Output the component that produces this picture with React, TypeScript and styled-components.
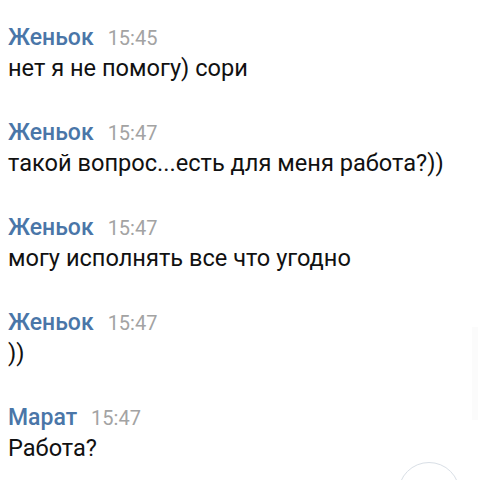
import React from "react";
import styled, { createGlobalStyle } from "styled-components";

const Global = createGlobalStyle`
  html, body { margin: 0; padding: 0; background: #ffffff; }
  body { font-family: Roboto, "Noto Sans", sans-serif; -webkit-font-smoothing: antialiased; }
`;

const Screen = styled.div`
  position: relative;
  width: 479px;
  height: 480px;
  overflow: hidden;
  background: #ffffff;
`;

const List = styled.div`
  display: flex;
  flex-direction: column;
  gap: 35px;
  padding: 24px 8px 0 8px;
`;

const Block = styled.div`
  display: flex;
  flex-direction: column;
`;

const Header = styled.div`
  display: flex;
  align-items: baseline;
  gap: 14px;
  height: 28px;
  line-height: 28px;
`;

const Name = styled.span`
  font-family: Roboto, sans-serif;
  font-weight: 500;
  font-size: 23px;
  color: #4a76a8;
`;

const Time = styled.span`
  font-family: Roboto, sans-serif;
  font-size: 20px;
  color: #a3a3a3;
`;

const Text = styled.div`
  font-family: Roboto, sans-serif;
  font-size: 23.6px;
  line-height: 32px;
  color: #111111;
`;

const Scrollbar = styled.div`
  position: absolute;
  right: 1px;
  top: 327px;
  width: 6px;
  height: 93px;
  background: #fbfbfb;
`;

const FabCircle = styled.div`
  position: absolute;
  left: 398px;
  top: 462px;
  width: 62px;
  height: 62px;
  border-radius: 50%;
  border: 1.5px solid #d9dfe6;
  background: #ffffff;
  box-sizing: border-box;
`;

const messages = [
  { name: "Женьок", time: "15:45", text: "нет я не помогу) сори" },
  { name: "Женьок", time: "15:47", text: "такой вопрос...есть для меня работа?))" },
  { name: "Женьок", time: "15:47", text: "могу исполнять все что угодно" },
  { name: "Женьок", time: "15:47", text: "))" },
  { name: "Марат", time: "15:47", text: "Работа?" },
];

export default function App() {
  return (
    <Screen>
      <Global />
      <List>
        {messages.map((m, i) => (
          <Block key={i}>
            <Header>
              <Name>{m.name}</Name>
              <Time>{m.time}</Time>
            </Header>
            <Text>{m.text}</Text>
          </Block>
        ))}
      </List>
      <Scrollbar />
      <FabCircle />
    </Screen>
  );
}
